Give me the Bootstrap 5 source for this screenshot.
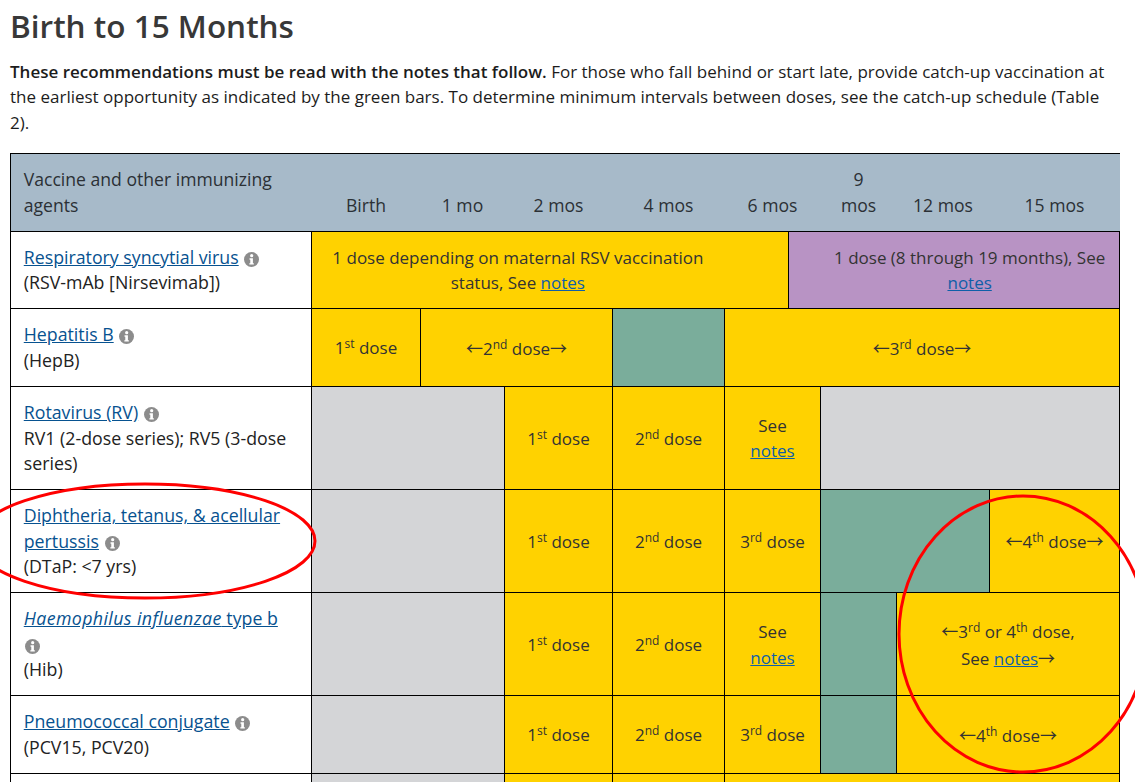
<!DOCTYPE html>
<html lang="en">
<head>
<meta charset="utf-8">
<title>Birth to 15 Months</title>
<link href="https://cdn.jsdelivr.net/npm/bootstrap@5.3.0/dist/css/bootstrap.min.css" rel="stylesheet">
<style>
html, body { background: #fff; }
body { font-family: "Open Sans", sans-serif; font-size: 17px; line-height: 1.6; color: #1c1c1c; }
.viewport-clip { position: relative; height: 782px; overflow: hidden; padding: 0 15px 0 10px; }
.sched-title { font-family: "Open Sans", sans-serif; font-size: 31.5px; font-weight: 600; line-height: 1.2; color: #383838; margin: 7px 0 0; }
.sched-intro { margin: 14px 0 17.5px; line-height: 25.6px; }
.sched-intro strong { font-weight: 600; }
.sched { table-layout: fixed; width: 1109px; margin: 0; border-collapse: collapse; border-color: #000; line-height: 25.6px; font-size: 17.6px; }
.sched > :not(caption) > * > * { padding: 13.2px 12.75px 12.2px; color: #333; border: 1px solid #000; font-weight: 400; box-shadow: none; }
.sched thead th { --bs-table-bg: #a7bac9; border-left: 0; border-right: 0; text-align: center; vertical-align: bottom; color: #2b3035; }
.sched thead th:first-child { text-align: left; border-left: 1px solid #000; }
.sched tbody th { --bs-table-bg: #fff; text-align: left; vertical-align: top; color: #222; font-size: 17.75px; }
.sched tbody td { text-align: center; vertical-align: middle; font-size: 17px; }
.sched a { color: #075290; }
.sched td a { color: #0f5fa8; }
.sched em { letter-spacing: .4px; }
.sched sup { font-size: 12px; }
.arw { font-family: "Noto Sans CJK JP", sans-serif; }
.c-yellow { --bs-table-bg: #ffd200; }
.c-green { --bs-table-bg: #7aad9b; }
.c-grey { --bs-table-bg: #d4d5d7; }
.c-purple { --bs-table-bg: #b893c4; }
.sched > tbody > tr > td.pad-rsv-y { padding-right: 77px; }
.sched > tbody > tr > td.pad-rsv-p { padding-left: 44px; }
.info-ic { width: 15px; height: 15px; vertical-align: -3px; margin-left: 1px; }
.mark-overlay { position: absolute; left: 0; top: 0; width: 1135px; height: 782px; pointer-events: none; }
</style>
</head>
<body>
<div class="viewport-clip">
  <h2 class="sched-title">Birth to 15 Months</h2>
  <p class="sched-intro"><strong>These recommendations must be read with the notes that follow.</strong> For those who fall behind or start late, provide catch-up vaccination at the earliest opportunity as indicated by the green bars. To determine minimum intervals between doses, see the catch-up schedule (Table 2).</p>

  <svg width="0" height="0" class="d-block position-absolute" aria-hidden="true">
    <symbol id="ic-info" viewBox="0 0 16 16">
      <circle cx="8" cy="8" r="8" fill="#8c8c8c"/>
      <circle cx="8.2" cy="3.9" r="1.7" fill="#fff"/>
      <path d="M5.9 6.7h3.6v5.2h1v1.5H5.7v-1.5h1v-3.7h-.8z" fill="#fff"/>
    </symbol>
  </svg>

  <table class="table table-bordered sched">
    <colgroup>
      <col style="width:301px"><col style="width:109px"><col style="width:84px"><col style="width:108px"><col style="width:112px"><col style="width:64px"><col style="width:32px"><col style="width:76px"><col style="width:93px"><col style="width:130px">
    </colgroup>
    <thead>
      <tr>
        <th>Vaccine and other immunizing agents</th>
        <th>Birth</th><th>1 mo</th><th>2 mos</th><th>4 mos</th><th colspan="2">6 mos</th><th>9<br>mos</th><th>12 mos</th><th>15 mos</th>
      </tr>
    </thead>
    <tbody>
      <tr>
        <th><a href="#">Respiratory syncytial virus</a> <svg class="info-ic"><use href="#ic-info"/></svg><br>(RSV-mAb [Nirsevimab])</th>
        <td colspan="5" class="c-yellow pad-rsv-y">1 dose depending on maternal RSV vaccination status, See <a href="#">notes</a></td>
        <td colspan="4" class="c-purple pad-rsv-p">1 dose (8 through 19 months), See <a href="#">notes</a></td>
      </tr>
      <tr>
        <th><a href="#">Hepatitis B</a> <svg class="info-ic"><use href="#ic-info"/></svg><br>(HepB)</th>
        <td class="c-yellow">1<sup>st</sup> dose</td>
        <td colspan="2" class="c-yellow"><span class="arw">←</span>2<sup>nd</sup> dose<span class="arw">→</span></td>
        <td class="c-green"></td>
        <td colspan="5" class="c-yellow"><span class="arw">←</span>3<sup>rd</sup> dose<span class="arw">→</span></td>
      </tr>
      <tr>
        <th><a href="#">Rotavirus (RV)</a> <svg class="info-ic"><use href="#ic-info"/></svg><br>RV1 (2-dose series); RV5 (3-dose series)</th>
        <td colspan="2" class="c-grey"></td>
        <td class="c-yellow">1<sup>st</sup> dose</td>
        <td class="c-yellow">2<sup>nd</sup> dose</td>
        <td colspan="2" class="c-yellow">See <a href="#">notes</a></td>
        <td colspan="3" class="c-grey"></td>
      </tr>
      <tr>
        <th><a href="#">Diphtheria, tetanus, &amp; acellular pertussis</a> <svg class="info-ic"><use href="#ic-info"/></svg><br>(DTaP: &lt;7 yrs)</th>
        <td colspan="2" class="c-grey"></td>
        <td class="c-yellow">1<sup>st</sup> dose</td>
        <td class="c-yellow">2<sup>nd</sup> dose</td>
        <td colspan="2" class="c-yellow">3<sup>rd</sup> dose</td>
        <td colspan="2" class="c-green"></td>
        <td class="c-yellow"><span class="arw">←</span>4<sup>th</sup> dose<span class="arw">→</span></td>
      </tr>
      <tr>
        <th><a href="#"><em>Haemophilus influenzae</em> type b</a><br><svg class="info-ic"><use href="#ic-info"/></svg><br>(Hib)</th>
        <td colspan="2" class="c-grey"></td>
        <td class="c-yellow">1<sup>st</sup> dose</td>
        <td class="c-yellow">2<sup>nd</sup> dose</td>
        <td colspan="2" class="c-yellow">See <a href="#">notes</a></td>
        <td class="c-green"></td>
        <td colspan="2" class="c-yellow"><span class="arw">←</span>3<sup>rd</sup> or 4<sup>th</sup> dose,<br>See <a href="#">notes</a><span class="arw">→</span></td>
      </tr>
      <tr>
        <th><a href="#">Pneumococcal conjugate</a> <svg class="info-ic"><use href="#ic-info"/></svg><br>(PCV15, PCV20)</th>
        <td colspan="2" class="c-grey"></td>
        <td class="c-yellow">1<sup>st</sup> dose</td>
        <td class="c-yellow">2<sup>nd</sup> dose</td>
        <td colspan="2" class="c-yellow">3<sup>rd</sup> dose</td>
        <td class="c-green"></td>
        <td colspan="2" class="c-yellow"><span class="arw">←</span>4<sup>th</sup> dose<span class="arw">→</span></td>
      </tr>
      <tr>
        <th></th>
        <td colspan="2" class="c-grey"></td>
        <td class="c-yellow"></td>
        <td class="c-yellow"></td>
        <td colspan="5" class="c-yellow"></td>
      </tr>
    </tbody>
  </table>

  <svg class="mark-overlay" viewBox="0 0 1135 782" aria-hidden="true">
    <ellipse cx="145" cy="541" rx="170" ry="57" fill="none" stroke="#f00" stroke-width="3"/>
    <ellipse cx="1023" cy="634" rx="124" ry="138" fill="none" stroke="#f00" stroke-width="3"/>
  </svg>
</div>
</body>
</html>
